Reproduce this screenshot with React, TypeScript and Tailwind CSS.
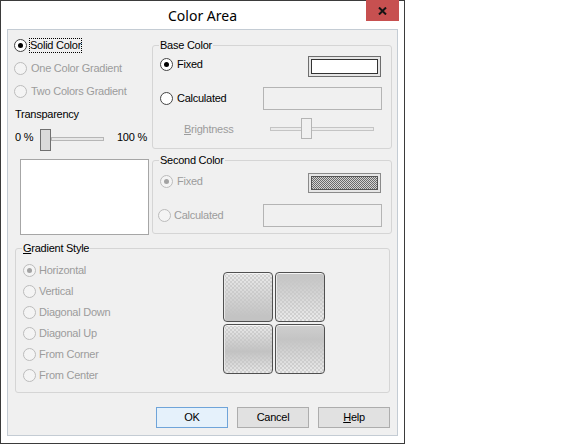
import React from "react";

function Radio({ checked, disabled }: { checked?: boolean; disabled?: boolean }) {
  return (
    <span
      className={
        disabled
          ? "w-[13px] h-[13px] rounded-full border border-[#bcbcbc] bg-[#f4f4f4] flex items-center justify-center shrink-0"
          : "w-[13px] h-[13px] rounded-full border border-[#444444] bg-white flex items-center justify-center shrink-0"
      }
    >
      {checked && (
        <span className={disabled ? "w-[5px] h-[5px] rounded-full bg-[#a3a3a3]" : "w-[5px] h-[5px] rounded-full bg-black"} />
      )}
    </span>
  );
}

function Group({ label, className, children }: { label: React.ReactNode; className: string; children?: React.ReactNode }) {
  return (
    <div className={"relative border border-[#d5d5d5] rounded-[3px] " + className}>
      <span className="absolute top-[-7px] left-[6px] px-[1px] bg-[#f0f0f0] leading-[13px] whitespace-nowrap">{label}</span>
      {children}
    </div>
  );
}

function Tile({ kind }: { kind: number }) {
  const cls =
    kind === 0
      ? "[background-image:linear-gradient(to_bottom,rgba(196,196,196,0.05),#c3c3c3_90%),repeating-conic-gradient(#d2d2d2_0_25%,#ededed_0_50%)]"
      : kind === 1
      ? "[background-image:linear-gradient(to_bottom,#c6c6c6_10%,rgba(196,196,196,0.05)),repeating-conic-gradient(#d2d2d2_0_25%,#ededed_0_50%)]"
      : kind === 2
      ? "[background-image:linear-gradient(to_bottom,rgba(196,196,196,0.05),#c2c2c2_55%,rgba(196,196,196,0.1)),repeating-conic-gradient(#d2d2d2_0_25%,#ededed_0_50%)]"
      : "[background-image:linear-gradient(to_bottom,#cdcdcd_5%,#c4c4c4_30%,rgba(196,196,196,0.05)),repeating-conic-gradient(#d2d2d2_0_25%,#ededed_0_50%)]";
  return (
    <div
      className={
        "w-[50px] h-[50px] rounded-[4px] border border-[#505050] shadow-[inset_0_1px_0_#f4f4f4,inset_1px_0_0_#e8e8e8] [background-size:100%_100%,4px_4px] " +
        cls
      }
    />
  );
}

export default function App() {
  const gray = "text-[#9c9c9c]";
  return (
    <div className="w-[576px] h-[444px] bg-white font-['Liberation_Sans',Arial,sans-serif] text-[11px] tracking-[-0.25px] leading-[13px] text-black">
      <div className="relative w-[405px] h-[444px] border border-[#3b3b3b] bg-white flex flex-col">
        <div className="h-[28px] pt-[1px] flex items-center justify-center font-['Noto_Sans',sans-serif] text-[14px] tracking-normal text-black">
          Color Area
        </div>
        <div className="absolute top-[-1px] right-[5px] w-[33px] h-[21px] bg-[#c75050] flex items-center justify-center">
          <svg width="9" height="8" viewBox="0 0 9 8">
            <path d="M1 0.5 L8 7.5 M8 0.5 L1 7.5" stroke="#141414" strokeWidth="2" />
          </svg>
        </div>

        <div className="mx-[6px] mb-[7px] flex-1 border border-[#c4ccd4] bg-[#f0f0f0] flex flex-col">
          {/* top section */}
          <div className="flex items-start">
            {/* left column */}
            <div className="w-[144px] flex flex-col pt-[4px]">
              <div className="h-[23px] flex items-center pl-[6px]">
                <Radio checked />
                <span className="ml-[2px] border border-dotted border-black leading-[13px]">Solid Color</span>
              </div>
              <div className={"h-[23px] flex items-center pl-[6px] " + gray}>
                <Radio disabled />
                <span className="ml-[4px]">One Color Gradient</span>
              </div>
              <div className={"h-[23px] flex items-center pl-[6px] " + gray}>
                <Radio disabled />
                <span className="ml-[4px]">Two Colors Gradient</span>
              </div>
              <div className="h-[22px] flex items-center pl-[7px]">Transparency</div>
              <div className="mt-[4px] h-[22px] flex items-start pl-[7px]">
                <span className="w-[25px] mt-[2px]">0 %</span>
                <span className="w-[11px] h-[22px] border border-[#707070] bg-[#dadada]" />
                <span className="w-[53px] h-[4px] mt-[8px] border border-[#b6b6b6] bg-[#e7e7e7]" />
                <span className="ml-[13px] mt-[2px]">100 %</span>
              </div>
              <div className="mt-[8px] ml-[12px] w-[129px] h-[76px] border border-[#a6a6a6] bg-white" />
            </div>

            {/* right column */}
            <div className="w-[240px] flex flex-col">
              <Group label="Base Color" className="mt-[15px] h-[104px]">
                <div className="mt-[8px] h-[20px] flex items-center pl-[7px]">
                  <Radio checked />
                  <span className="ml-[4px]">Fixed</span>
                  <span className="ml-auto mr-[10px] self-start mt-[2px] w-[73px] h-[21px] border border-[#6e6e6e] p-[2px] bg-[#e6e6e6]">
                    <span className="block w-full h-full border border-[#333333] bg-white" />
                  </span>
                </div>
                <div className="mt-[13px] h-[23px] flex items-center pl-[7px]">
                  <Radio />
                  <span className="ml-[4px]">Calculated</span>
                  <span className="ml-auto mr-[9px] w-[119px] h-[23px] border border-[#b4b4b4]" />
                </div>
                <div className="mt-[8px] h-[22px] flex items-center pl-[31px]">
                  <span className={"w-[86px] " + gray}>
                    <u>B</u>rightness
                  </span>
                  <span className="relative w-[104px] h-[22px] flex items-center">
                    <span className="w-full h-[4px] border border-[#c4c4c4] bg-[#ebebeb]" />
                    <span className="absolute top-0 left-[31px] w-[11px] h-[21px] border border-[#b4b4b4] bg-[#f0f0f0]" />
                  </span>
                </div>
              </Group>

              <Group label="Second Color" className="mt-[11px] h-[74px]">
                <div className={"mt-[10px] h-[20px] flex items-center pl-[7px] " + gray}>
                  <Radio checked disabled />
                  <span className="ml-[4px]">Fixed</span>
                  <span className="ml-auto mr-[10px] self-start mt-[2px] w-[73px] h-[20px] border border-[#8a8a8a] p-[2px] bg-[#e6e6e6]">
                    <span className="block w-full h-full border border-[#555555] [background:repeating-conic-gradient(#6a6a6a_0_25%,#d4d4d4_0_50%)_0_0/2px_2px]" />
                  </span>
                </div>
                <div className={"mt-[13px] h-[23px] flex items-center pl-[5px] " + gray}>
                  <Radio disabled />
                  <span className="ml-[3px]">Calculated</span>
                  <span className="ml-auto mr-[9px] w-[119px] h-[23px] border border-[#b4b4b4]" />
                </div>
              </Group>
            </div>
          </div>

          {/* gradient style */}
          <Group
            label={
              <>
                <u>G</u>radient Style
              </>
            }
            className="mt-[13px] ml-[7px] w-[375px] h-[145px]"
          >
            <div className="flex items-start">
              <div className={"w-[207px] pt-[11px] pl-[7px] flex flex-col " + gray}>
                {["Horizontal", "Vertical", "Diagonal Down", "Diagonal Up", "From Corner", "From Center"].map((t, i) => (
                  <div key={t} className="h-[21px] flex items-center">
                    <Radio disabled checked={i === 0} />
                    <span className="ml-[3px]">{t}</span>
                  </div>
                ))}
              </div>
              <div className="mt-[23px] grid grid-cols-[50px_50px] gap-[2px]">
                <Tile kind={0} />
                <Tile kind={1} />
                <Tile kind={2} />
                <Tile kind={3} />
              </div>
            </div>
          </Group>

          {/* buttons */}
          <div className="mt-[14px] flex justify-end gap-[9px] pr-[7px]">
            <button className="w-[72px] h-[21px] border border-[#6fa4d9] bg-[#e5f1fb] flex items-center justify-center">OK</button>
            <button className="w-[72px] h-[21px] border border-[#adadad] bg-[#e1e1e1] flex items-center justify-center">Cancel</button>
            <button className="w-[72px] h-[21px] border border-[#adadad] bg-[#e1e1e1] flex items-center justify-center">
              <span>
                <u>H</u>elp
              </span>
            </button>
          </div>
        </div>
      </div>
    </div>
  );
}
